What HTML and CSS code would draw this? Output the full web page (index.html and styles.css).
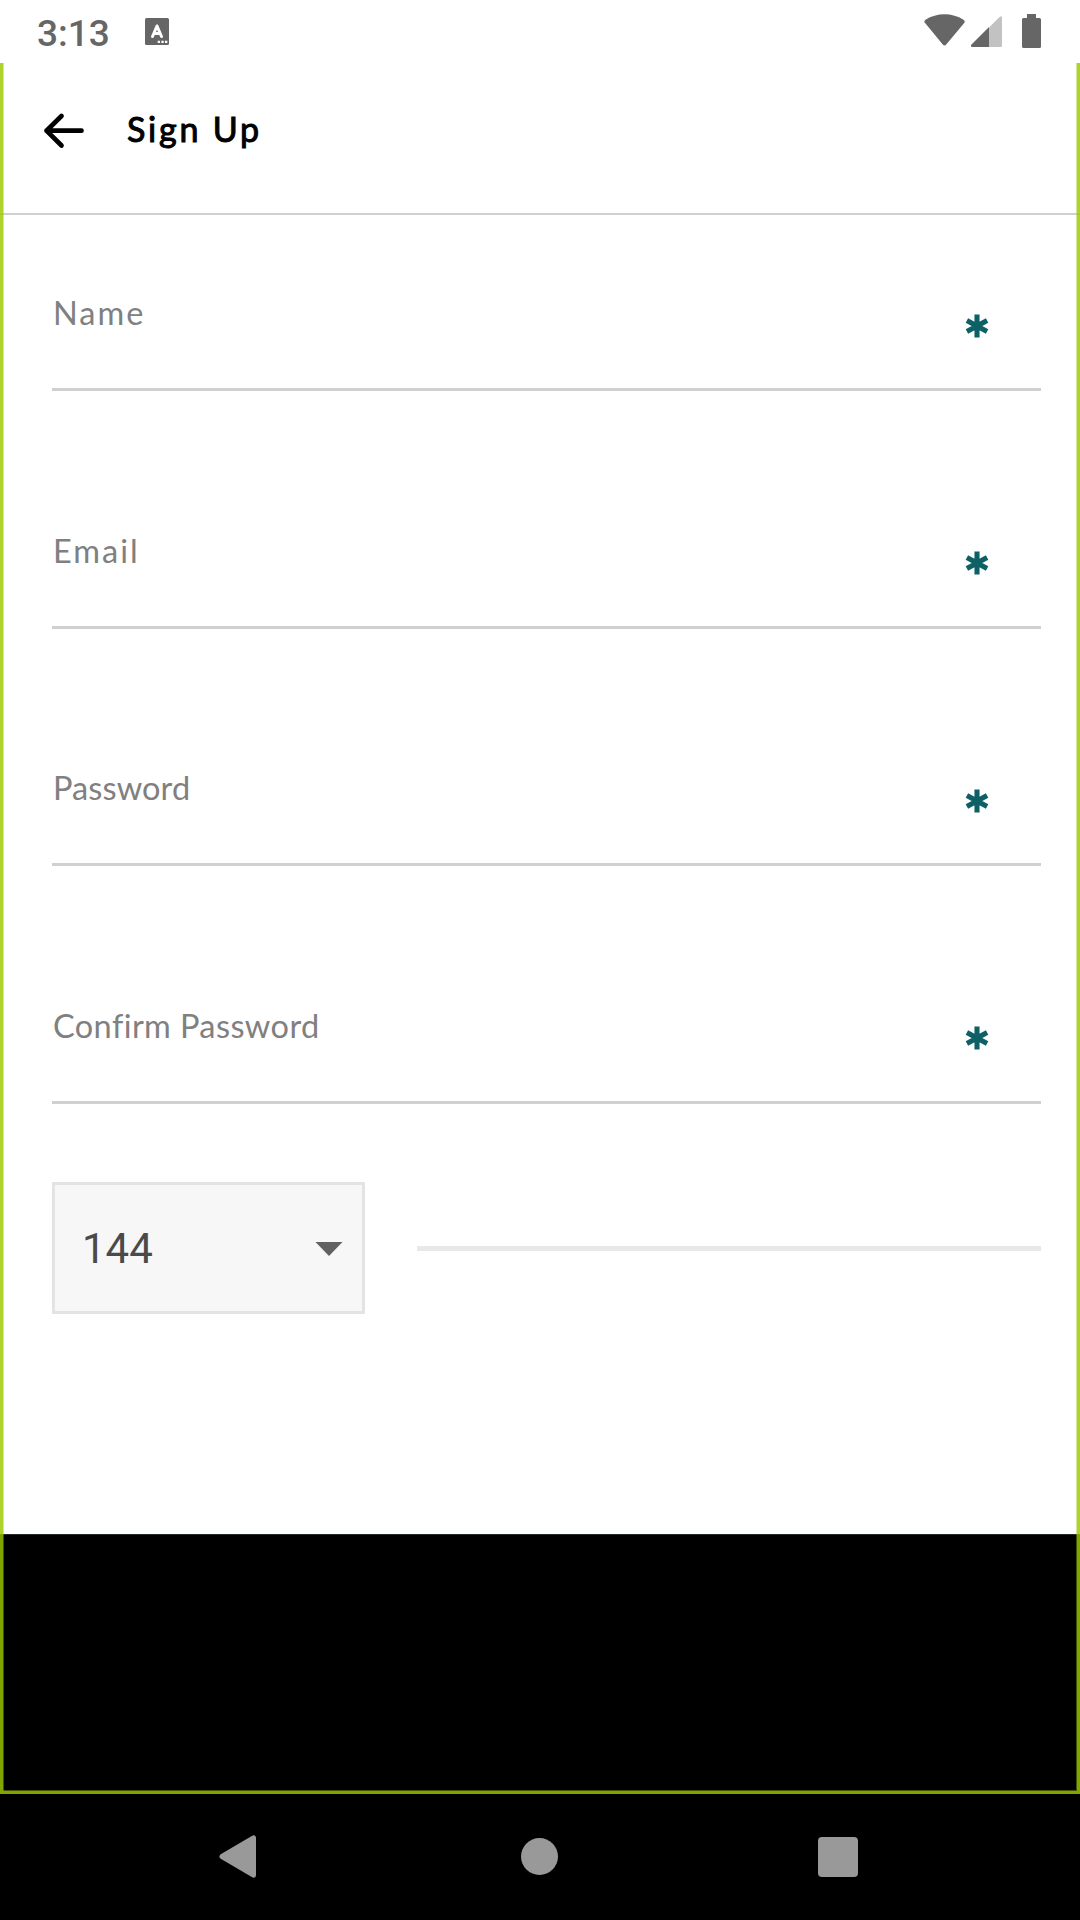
FILE: index.html
```html
<!DOCTYPE html>
<html lang="en">
<head>
<meta charset="utf-8">
<title>Sign Up</title>
<link rel="stylesheet" href="styles.css">
</head>
<body>
<div class="phone">
  <header class="status">
    <span class="clock">3:13</span>
    <svg class="note" width="24" height="27" viewBox="0 0 24 27"><rect width="24" height="27" rx="1.500" fill="#666"/><path d="M7.500 18.500L12 8l4.500 10.500M9 15.500h6" fill="none" stroke="#fff" stroke-width="3" stroke-linejoin="round" stroke-linecap="round"/><path d="M12.700 22.700h2.300v2.300h-2.300zM16.400 22.700h2.300v2.300h-2.300zM20 22.700h2.300v2.300H20z" fill="#fff"/></svg>
    <svg class="signals" width="120" height="36" viewBox="0 0 120 36"><path d="M1.300 9.300C-.2 8.100.2 6.800 1.500 5.800 12.500-1.600 28.500-1.600 39.500 5.800 41 6.800 41.100 8.100 40 9.300L22 30.700q-1.500 1.600-3 0z" fill="#666"/><path d="M65 13.500L75.500 3Q78 1.300 78 4v27.500q0 1.500-1.500 1.500H65z" fill="#c2c2c2"/><path d="M65 13V33H48.500Q46 33 47.500 30.500z" fill="#666"/><path d="M103 0h9v4h3.500q1.500 0 1.500 1.500v27q0 1.500-1.500 1.500h-16q-1.500 0-1.500-1.500v-27Q98 4 99.500 4H103z" fill="#666"/></svg>
  </header>
  <main class="app">
    <div class="appbar">
      <svg width="42" height="38" viewBox="0 0 42 38"><path d="M19.500 4L4.500 18.700l15 14.800M4.500 18.700h35" fill="none" stroke="#000" stroke-width="4.700" stroke-linecap="round" stroke-linejoin="round"/></svg>
      <h1 class="title">Sign Up</h1>
    </div>
    <form class="form">
      <div class="field"><span class="label name">Name</span><svg class="star" width="24" height="24" viewBox="0 0 24 24"><path d="M12 .5v23M1.900 6.500l20.200 11M1.900 17.500l20.200-11"/></svg></div>
      <div class="field"><span class="label email">Email</span><svg class="star" width="24" height="24" viewBox="0 0 24 24"><path d="M12 .5v23M1.900 6.500l20.200 11M1.900 17.500l20.200-11"/></svg></div>
      <div class="field"><span class="label password">Password</span><svg class="star" width="24" height="24" viewBox="0 0 24 24"><path d="M12 .5v23M1.900 6.500l20.200 11M1.900 17.500l20.200-11"/></svg></div>
      <div class="field"><span class="label confirm">Confirm Password</span><svg class="star" width="24" height="24" viewBox="0 0 24 24"><path d="M12 .5v23M1.900 6.500l20.200 11M1.900 17.500l20.200-11"/></svg></div>
      <div class="phone-row">
        <div class="select"><span>144</span><svg width="28" height="14" viewBox="0 0 28 14"><path d="M.5 0h27L14 14z" fill="#616161"/></svg></div>
        <div class="number"></div>
      </div>
    </form>
    <div class="keyboard"></div>
    <div class="frame"></div>
  </main>
  <nav class="nav">
    <svg width="38" height="44" viewBox="0 0 38 44"><path d="M34.500 2.800v37.400L3 21.500z" fill="#999" stroke="#999" stroke-width="5" stroke-linejoin="round"/></svg>
    <span class="home"></span>
    <span class="recent"></span>
  </nav>
</div>
</body>
</html>
```
FILE: styles.css
```css
* { box-sizing: border-box; }
body { margin: 0; background: #fff; }
svg { display: block; flex: none; }
.phone { width: 1080px; height: 1920px; display: flex; flex-direction: column; overflow: hidden; }
.status { height: 63px; display: flex; align-items: flex-start; padding: 0 37px; font-family: Roboto, sans-serif; }
.clock { width: 108px; font-size: 37px; font-weight: 500; line-height: 44px; margin-top: 12px; color: #666; }
.note { margin-top: 18px; }
.signals { margin: 14px -1px 0 auto; }
.app { position: relative; height: 1731px; display: flex; flex-direction: column; }
.appbar { height: 152px; display: flex; align-items: flex-start; gap: 43px; padding: 49px 42px 0; border-bottom: 2px solid #d0d0d0; }
.title { margin: -23px 0 0; font: 400 34px/80px Lato, sans-serif; letter-spacing: 2.800px; color: #000; -webkit-text-stroke: 1px #000; }
.form { height: 1319px; padding: 56px 39px 0 52px; display: flex; flex-direction: column; }
.field { height: 120.300px; margin-bottom: 117.300px; flex: none; display: flex; justify-content: space-between; align-items: flex-start; padding: 20px 52px 0 1px; border-bottom: 3px solid #d0d0d0; }
.label { font: 400 32.500px/44px Lato, sans-serif; color: #808080; white-space: nowrap; }
.name { letter-spacing: 2px; }
.email { letter-spacing: 2px; }
.password { letter-spacing: .1px; }
.confirm { letter-spacing: .4px; }
.star { margin-top: 22.700px; fill: none; stroke: #0d6066; stroke-width: 5.100px; }
.phone-row { display: flex; align-items: center; gap: 52px; height: 132px; margin-top: -39px; flex: none; }
.select { width: 313px; height: 132px; border: 3px solid #e3e3e3; background: #f7f7f7; display: flex; justify-content: space-between; align-items: center; padding: 2px 19px 0 27px; font: 400 42px/50px Roboto, sans-serif; color: #4a4a4a; }
.number { flex: 1; height: 5px; background: #e8e8e8; }
.keyboard { flex: 1; background: #000; border-top: 1px solid #252a2c; }
.frame { position: absolute; inset: 0; border: 3px solid rgba(158, 201, 0, .82); border-top: 0; box-shadow: inset 1px 0 rgba(158, 201, 0, .42), inset -1px -1px rgba(158, 201, 0, .42); }
.nav { height: 126px; background: #000; display: flex; align-items: center; padding: 0 222px 1px 219px; justify-content: space-between; }
.home { width: 37px; height: 37px; border-radius: 50%; background: #999; margin-left: 3px; }
.recent { width: 40px; height: 40px; border-radius: 4px; background: #999; }
```
